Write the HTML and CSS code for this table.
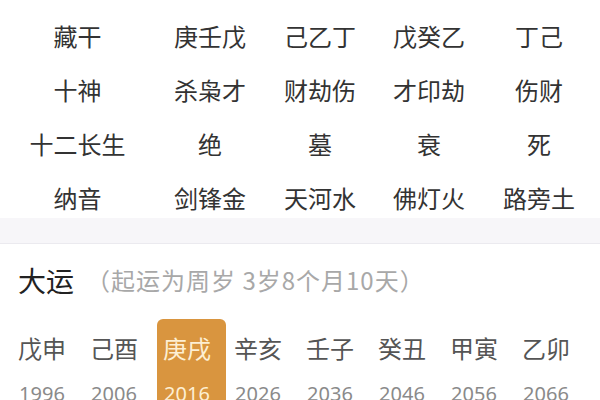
FILE: index.html
```html
<!DOCTYPE html>
<html lang="zh-CN">
<head>
<meta charset="utf-8">
<link rel="stylesheet" href="styles.css">
</head>
<body>
<div class="table">
  <div>藏干</div><div>庚壬戊</div><div>己乙丁</div><div>戊癸乙</div><div>丁己</div>
  <div>十神</div><div>杀枭才</div><div>财劫伤</div><div>才印劫</div><div>伤财</div>
  <div>十二长生</div><div>绝</div><div>墓</div><div>衰</div><div>死</div>
  <div>纳音</div><div>剑锋金</div><div>天河水</div><div>佛灯火</div><div>路旁土</div>
</div>
<div class="band"></div>
<div class="header">
  <span class="title">大运</span>
  <span class="sub">（起运为周岁 3岁8个月10天）</span>
</div>
<div class="dayun">
  <div class="item"><span class="gz">戊申</span><span class="yr">1996</span></div>
  <div class="item"><span class="gz">己酉</span><span class="yr">2006</span></div>
  <div class="item active"><span class="gz">庚戌</span><span class="yr">2016</span></div>
  <div class="item"><span class="gz">辛亥</span><span class="yr">2026</span></div>
  <div class="item"><span class="gz">壬子</span><span class="yr">2036</span></div>
  <div class="item"><span class="gz">癸丑</span><span class="yr">2046</span></div>
  <div class="item"><span class="gz">甲寅</span><span class="yr">2056</span></div>
  <div class="item"><span class="gz">乙卯</span><span class="yr">2066</span></div>
</div>
</body>
</html>
```
FILE: styles.css
```css
html, body {
  margin: 0;
  padding: 0;
  background: #ffffff;
}
body {
  width: 600px;
  height: 400px;
  overflow: hidden;
  font-family: "Noto Sans CJK SC", "Noto Sans", sans-serif;
}
.table {
  display: grid;
  grid-template-columns: 155px 110px 110px 108px 112px;
  grid-auto-rows: 40px;
  row-gap: 14px;
  padding-top: 16px;
  align-items: center;
  justify-items: center;
  font-size: 24px;
  line-height: 40px;
  color: #333333;
}
.band {
  height: 25px;
  background: #f7f6f9;
  border-bottom: 1px solid #ebeaef;
}
.header {
  display: flex;
  align-items: center;
  height: 40px;
  margin-top: 16px;
  padding-left: 18px;
  gap: 12px;
}
.title {
  font-size: 28px;
  line-height: 40px;
  color: #222222;
}
.sub {
  font-size: 24px;
  letter-spacing: 1px;
  line-height: 40px;
  color: #a8a8a8;
}
.dayun {
  display: flex;
  margin-top: 19px;
  padding-left: 6px;
}
.item {
  width: 72px;
  height: 100px;
  box-sizing: border-box;
  display: flex;
  flex-direction: column;
  align-items: center;
  padding-top: 12px;
  flex: none;
}
.gz {
  font-size: 24px;
  line-height: 34px;
  color: #555555;
}
.yr {
  margin-top: 17px;
  font-size: 20px;
  line-height: 24px;
  color: #8a8a8a;
  font-family: "Noto Sans", "Noto Sans CJK SC", sans-serif;
}
.item.active {
  width: 69px;
  margin-left: 7px;
  margin-right: -4px;
  padding-right: 9px;
  background: #d9953f;
  border-radius: 6px;
}
.item.active .gz,
.item.active .yr {
  color: #fdefd3;
}
```
